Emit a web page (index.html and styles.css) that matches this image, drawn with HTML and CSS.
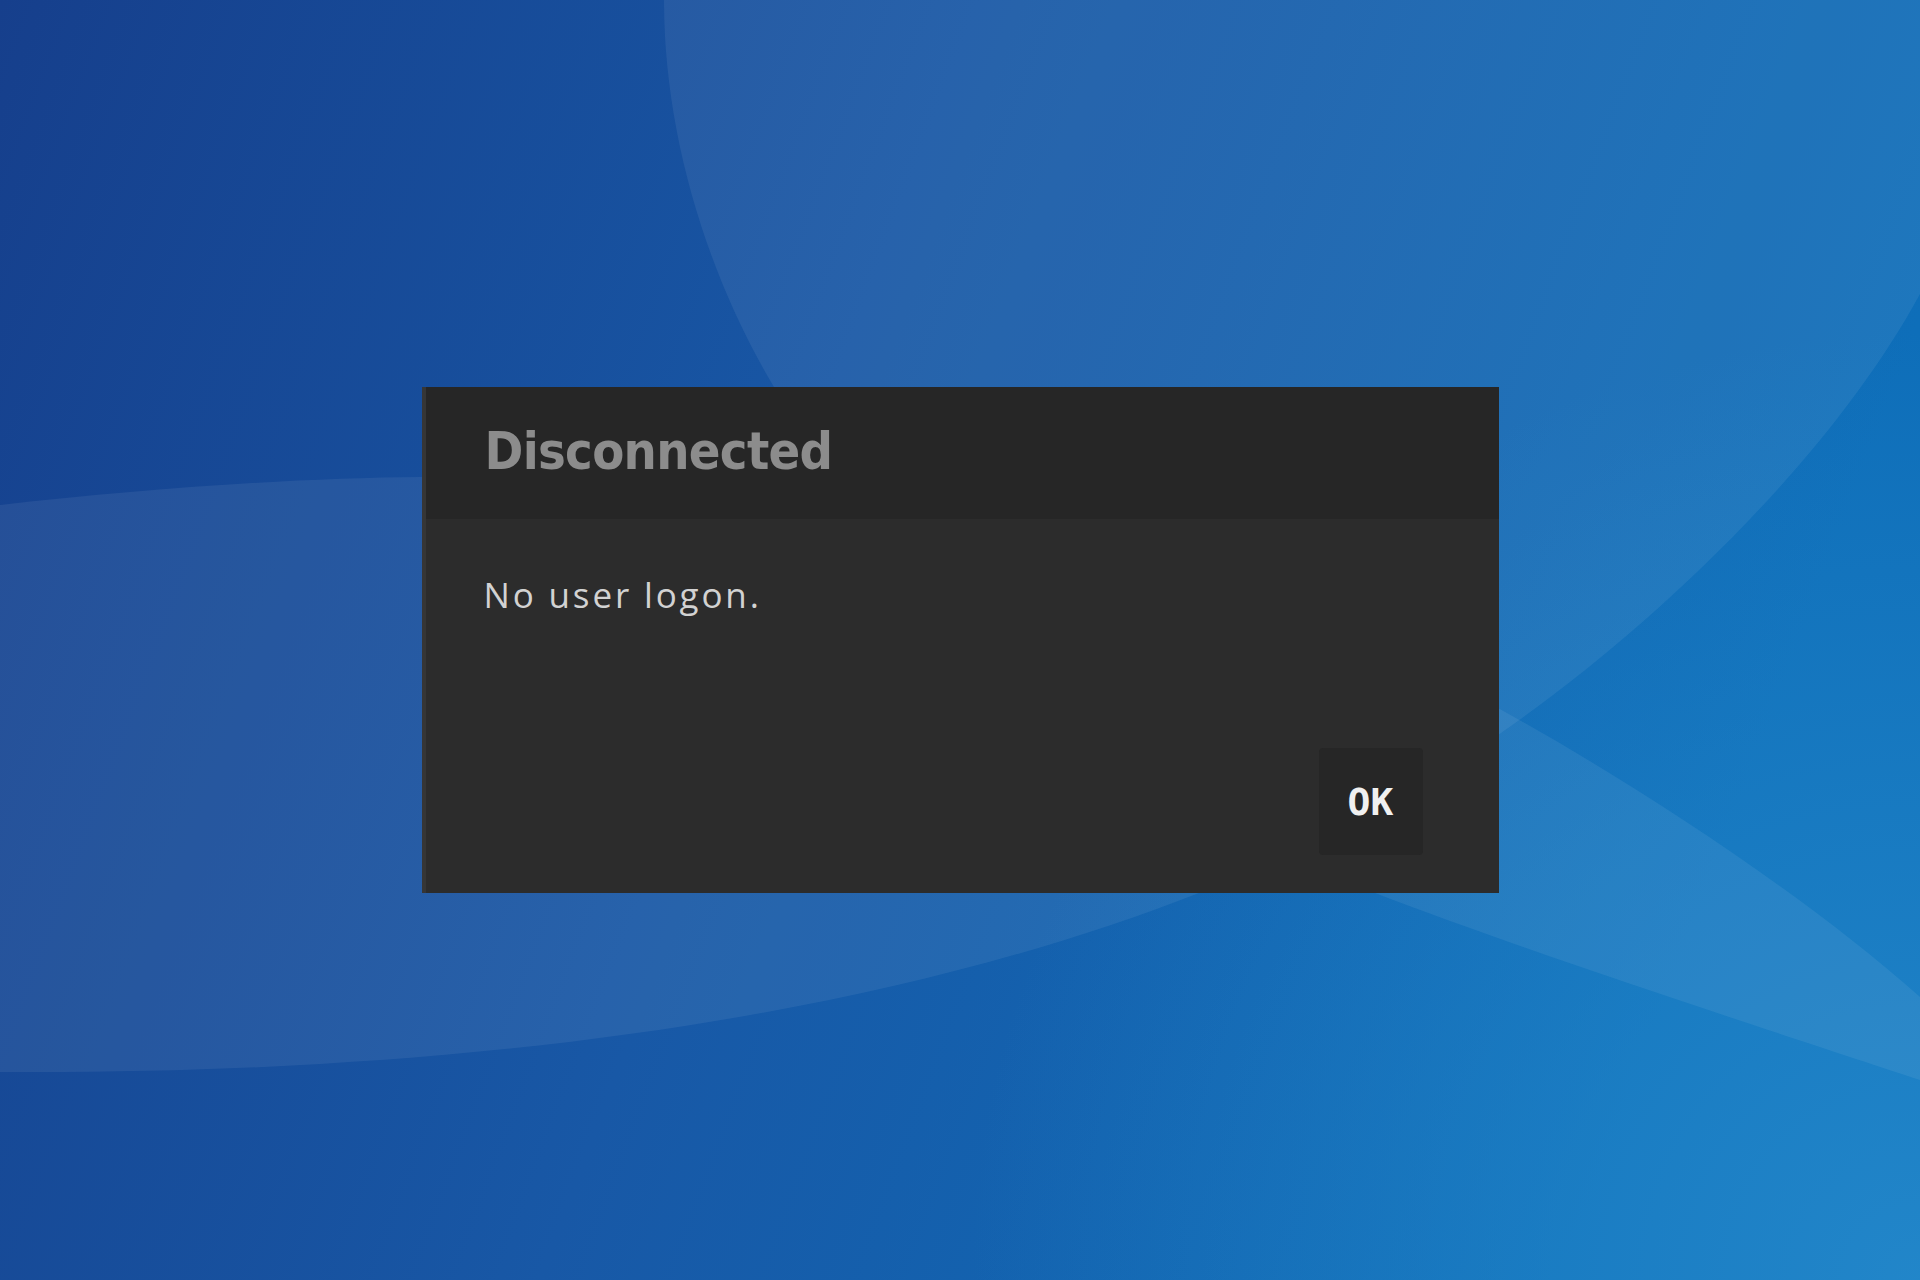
FILE: index.html
```html
<!DOCTYPE html>
<html>
    <head>
        <meta charset="UTF-8">
        <title>Disconnected</title>
        <link rel="stylesheet" href="styles.css">
    </head>
    <body>
        <svg class="wallpaper" viewBox="0 0 1920 1280" preserveAspectRatio="none" aria-hidden="true">
            <defs>
                <linearGradient id="base" x1="0" y1="0" x2="1" y2="0.25">
                    <stop offset="0" stop-color="#163f8c"/>
                    <stop offset="0.5" stop-color="#1858a6"/>
                    <stop offset="1" stop-color="#0e6eb9"/>
                </linearGradient>
                <radialGradient id="glow" cx="1920" cy="1280" r="950" gradientUnits="userSpaceOnUse">
                    <stop offset="0" stop-color="#2a90d0" stop-opacity="0.7"/>
                    <stop offset="1" stop-color="#2a90d0" stop-opacity="0"/>
                </radialGradient>
            </defs>
            <rect width="1920" height="1280" fill="url(#base)"/>
            <rect width="1920" height="1280" fill="url(#glow)"/>
            <!-- big arc, top right -->
            <path class="sheen" d="M664,0 C664,140 710,280 774,387 L1000,650 L1498,735 C1650,630 1830,460 1920,294 L1920,0 Z"/>
            <!-- wide band, left -->
            <path class="sheen" d="M0,505 C150,488 300,478 421,477 L1300,600 L1300,850 L1199,893 C900,1010 500,1075 0,1072 Z"/>
            <!-- band, lower right -->
            <path class="sheen" d="M1300,600 L1498,708 C1620,775 1800,890 1920,997 L1920,1080 C1800,1040 1550,960 1375,893 L1300,860 Z"/>
        </svg>

        <div class="dialog">
            <div class="dialog-head">
                <h1>Disconnected</h1>
            </div>
            <div class="dialog-body">
                <p>No user logon.</p>
                <button class="ok">OK</button>
            </div>
        </div>
    </body>
</html>
```

FILE: styles.css
```css
html{
    background:#163f8c;
}
body{
    margin:0;
    min-height:100vh;
    display:flex;
    align-items:center;
    justify-content:center;
    position:relative;
    overflow:hidden;
}
.wallpaper{
    position:absolute;
    left:0;
    top:0;
    width:100%;
    height:100%;
    z-index:0;
}
.sheen{
    fill:#ffffff;
    fill-opacity:0.065;
}
.dialog{
    position:relative;
    z-index:1;
    width:1073px;
    height:506px;
    border-left:4px solid #363636;
    background:#2c2c2c;
    display:flex;
    flex-direction:column;
}
.dialog-head{
    height:132px;
    box-sizing:border-box;
    padding:38px 59px 0;
    background:#262626;
}
.dialog-head h1{
    margin:0;
    font-family:"DejaVu Sans Condensed", "DejaVu Sans", sans-serif;
    font-weight:bold;
    font-size:52px;
    line-height:52px;
    letter-spacing:-0.7px;
    color:#8c8c8c;
}
.dialog-body{
    flex:1;
    display:flex;
    flex-direction:column;
    justify-content:space-between;
    padding:58px 76px 38px 58px;
}
.dialog-body p{
    margin:0;
    font-family:"Open Sans", "Noto Sans", sans-serif;
    font-size:35px;
    line-height:35px;
    letter-spacing:2.85px;
    color:#d2d2d2;
}
.ok{
    align-self:flex-end;
    width:104px;
    height:107px;
    border:0;
    border-radius:4px;
    background:#262626;
    color:#f0f0f0;
    font-family:"DejaVu Sans Mono", monospace;
    font-weight:bold;
    font-size:38px;
    padding:0;
    display:flex;
    align-items:center;
    justify-content:center;
}
```
